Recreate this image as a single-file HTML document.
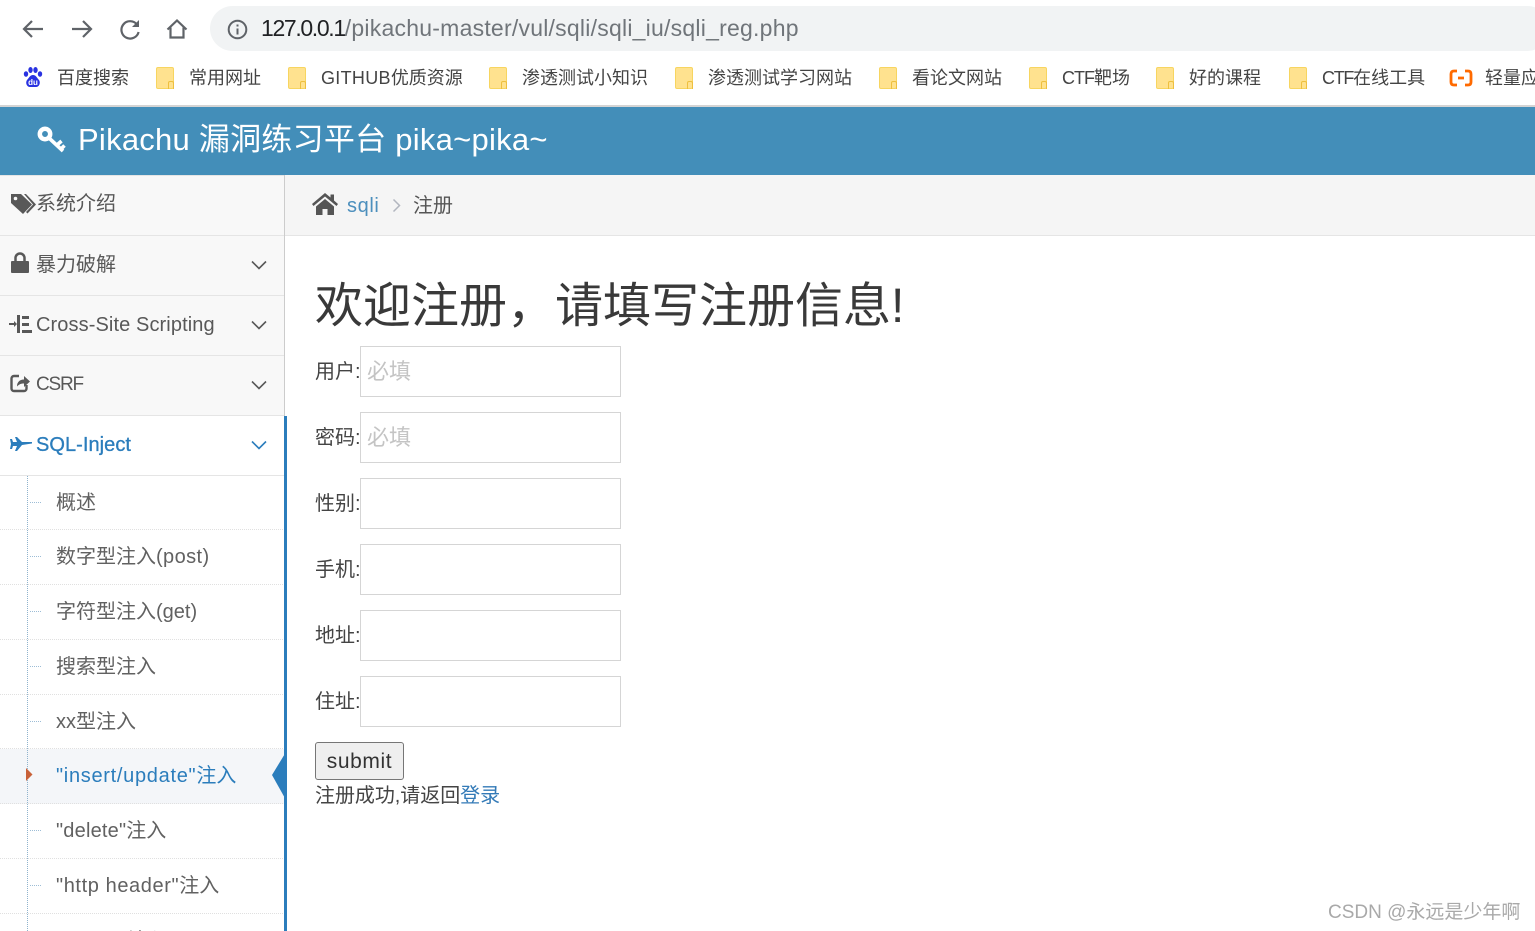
<!DOCTYPE html>
<html lang="zh"><head><meta charset="utf-8"><title>Pikachu</title>
<style>
*{box-sizing:border-box}
html,body{margin:0;padding:0;width:1535px;height:931px;overflow:hidden;background:#fff}
body{position:relative;font-family:"Liberation Sans","Noto Sans CJK SC",sans-serif;color:#393939}
.a{position:absolute;white-space:nowrap}
.bm{font-size:18px;line-height:24px;top:66px;color:#444}
.f{position:absolute;top:67px;width:18px;height:22px;background:#ffe28f;border:1px solid #f7d560;border-radius:2px}
.f:after{content:"";position:absolute;right:-1px;bottom:-1px;width:4px;height:7px;border:1px solid #eebf3f;border-radius:2px 2px 0 0;border-bottom:0}
.m{position:absolute;left:0;width:285px;height:60px;background:#f8f8f8;border-bottom:1px solid #e5e5e5;border-right:1px solid #ccc}
.m span{position:absolute;left:36px;top:15px;font-size:20px;line-height:28px;color:#585858;white-space:nowrap}
.m svg.c{position:absolute;left:251px;top:24px}
.m svg.i{position:absolute;left:9px;top:18px}
.s{position:absolute;left:0;width:285px;border-bottom:1px dotted #e0e0e0;background:#fff}
.s span{position:absolute;left:56px;top:14px;font-size:20px;line-height:26px;color:#616161;white-space:nowrap}
.s i{position:absolute;left:30px;width:11px;border-top:1px dotted #9dbdd6}
.lb{position:absolute;left:315px;font-size:20px;line-height:24px;color:#444;white-space:nowrap}
.in{position:absolute;left:360px;width:261px;height:51px;border:1px solid #d5d5d5;background:#fff;font-size:22px;line-height:47px;padding-left:6px;color:#c4c4c4}
</style></head><body>

<!-- browser toolbar -->
<svg class="a" style="left:20px;top:16px" width="170" height="26" viewBox="0 0 170 26" fill="none" stroke="#5f6368" stroke-width="2.2">
<path d="M23 13H4M12 5l-8 8 8 8"/>
<path d="M52 13h19M63 5l8 8-8 8"/>
<path d="M117 8.500a8.700 8.700 0 1 0 1.600 7.500"/><path d="M119 4v7h-7z" fill="#5f6368" stroke="none"/>
<path d="M147.500 13.500 157 4.500l9.500 9M150.500 11.500V21.500h13V11.500" stroke-linejoin="miter"/>
</svg>
<div class="a" style="left:210px;top:6px;width:1340px;height:45px;background:#f1f3f4;border-radius:23px"></div>
<svg class="a" style="left:227px;top:19px" width="21" height="21" viewBox="0 0 21 21" fill="none" stroke="#5f6368" stroke-width="2"><circle cx="10.500" cy="10.500" r="8.800"/><path d="M10.500 9.500v6M10.500 5.500v2"/></svg>
<div class="a" style="left:261px;top:14px;font-size:23px;line-height:29px;color:#70757a;letter-spacing:.23px"><span style="color:#202124;letter-spacing:-1.35px">127.0.0.1</span>/pikachu-master/vul/sqli/sqli_iu/sqli_reg.php</div>

<!-- bookmarks -->
<svg class="a" style="left:22px;top:66px" width="22" height="22" viewBox="0 0 22 22"><g fill="#2932e1"><ellipse cx="4" cy="8" rx="2.200" ry="2.800"/><ellipse cx="8.500" cy="4" rx="2.200" ry="3"/><ellipse cx="13.500" cy="4" rx="2.200" ry="3"/><ellipse cx="18" cy="8" rx="2.200" ry="2.800"/><path d="M11 9c-3 0-4 3-6 5-2 3 0 7 3 7h6c3 0 5-4 3-7-2-2-3-5-6-5z"/></g><text x="11" y="19" font-size="8" font-weight="700" text-anchor="middle" fill="#fff" font-family="Liberation Sans">du</text></svg>
<div class="a bm" style="left:57px">百度搜索</div>
<div class="f" style="left:156px"></div><div class="a bm" style="left:189px">常用网址</div>
<div class="f" style="left:288px"></div><div class="a bm" style="left:321px"><span style="letter-spacing:.3px">GITHUB</span>优质资源</div>
<div class="f" style="left:489px"></div><div class="a bm" style="left:522px">渗透测试小知识</div>
<div class="f" style="left:675px"></div><div class="a bm" style="left:708px">渗透测试学习网站</div>
<div class="f" style="left:879px"></div><div class="a bm" style="left:912px">看论文网站</div>
<div class="f" style="left:1029px"></div><div class="a bm" style="left:1062px"><span style="letter-spacing:-1px">CTF</span>靶场</div>
<div class="f" style="left:1156px"></div><div class="a bm" style="left:1189px">好的课程</div>
<div class="f" style="left:1289px"></div><div class="a bm" style="left:1322px"><span style="letter-spacing:-1.300px">CTF</span>在线工具</div>
<svg class="a" style="left:1449px;top:69px" width="24" height="18" viewBox="0 0 24 18" fill="none" stroke="#ff6a00" stroke-width="2.800"><path d="M8 2H5C3 2 2 3 2 5v8c0 2 1 3 3 3h3M16 2h3c2 0 3 1 3 3v8c0 2-1 3-3 3h-3M9 9h6"/></svg>
<div class="a bm" style="left:1485px">轻量应用</div>
<div class="a" style="left:0;top:105px;width:1535px;height:2px;background:#d4d4d4"></div>

<!-- navbar -->
<div class="a" style="left:0;top:107px;width:1535px;height:68px;background:#438eb9"></div>
<svg class="a" style="left:37px;top:125px" width="30" height="28" viewBox="0 0 30 28" fill="none" stroke="#fff"><circle cx="8" cy="9" r="5.200" stroke-width="4.500"/><path d="M12 13l14 13M20 20l4.500-4M24 24l3.500-3.500" stroke-width="3.600"/></svg>
<div class="a" style="left:78px;top:121px;font-size:31px;line-height:38px;color:#fff;letter-spacing:.25px">Pikachu 漏洞练习平台 pika~pika~</div>

<!-- breadcrumb -->
<div class="a" style="left:285px;top:175px;width:1250px;height:61px;background:#f5f5f5;border-bottom:1px solid #e5e5e5"></div>
<svg class="a" style="left:311px;top:192px" width="28" height="24" viewBox="0 0 28 24" fill="#555"><path d="M14 1 1 12l1.500 2L14 4.500 25.500 14l1.500-2-4-3.500V2.500h-3.500v3z"/><path d="M5 14.500 14 7l9 7.500V23h-6.500v-6h-5v6H5z"/></svg>
<div class="a" style="left:347px;top:193px;font-size:20px;line-height:26px;color:#4c8fbd;letter-spacing:.6px">sqli</div>
<svg class="a" style="left:391px;top:198px" width="11" height="15" viewBox="0 0 11 15" fill="none" stroke="#b2b6bf" stroke-width="1.500"><path d="M2.500 1.500 8.500 7.500 2.500 13.500"/></svg>
<div class="a" style="left:413px;top:193px;font-size:20px;line-height:26px;color:#555">注册</div>

<!-- sidebar -->
<div class="m" style="top:175px;height:61px;border-top:1px solid #e5e5e5"><svg class="i" style="top:17px;left:10px" width="27" height="22" viewBox="0 0 27 22" fill="#585858"><path d="M1 1h10l11 10.500-9 9.500L1 10z"/><path d="M14 1h2l10 10.500-8.500 9-1.500-1.500 7-7.500z"/><circle cx="5.500" cy="5.500" r="1.800" fill="#f8f8f8"/></svg><span style="top:14px">系统介绍</span></div>
<div class="m" style="top:236px"><svg class="i" style="left:11px;top:16px" width="18" height="22" viewBox="0 0 18 22" fill="#585858"><path d="M1 9h16a1 1 0 0 1 1 1v10a1 1 0 0 1-1 1H1a1 1 0 0 1-1-1V10a1 1 0 0 1 1-1z"/><path d="M4.500 9V6a4.500 4.500 0 0 1 9 0v3" fill="none" stroke="#585858" stroke-width="2.500"/></svg><span>暴力破解</span><svg class="c" width="16" height="11" viewBox="0 0 16 11" fill="none" stroke="#585858" stroke-width="1.600"><path d="M1 1.500 8 8.500 15 1.500"/></svg></div>
<div class="m" style="top:296px"><svg class="i" style="top:19px" width="23" height="18" viewBox="0 0 23 18" fill="#585858"><path d="M0 8h5V6l3 3-3 3v-2H0zM8 0h3v18H8zM13 1h7v3h-7zM13 8h7v3h-7zM13 15h10v3H13z"/></svg><span style="letter-spacing:.1px">Cross-Site Scripting</span><svg class="c" width="16" height="11" viewBox="0 0 16 11" fill="none" stroke="#585858" stroke-width="1.600"><path d="M1 1.500 8 8.500 15 1.500"/></svg></div>
<div class="m" style="top:356px"><svg class="i" style="left:10px;top:17px" width="22" height="20" viewBox="0 0 22 20" fill="none" stroke="#585858" stroke-width="2.400"><path d="M9 3H4a2.500 2.500 0 0 0-2.500 2.500v10A2.500 2.500 0 0 0 4 18h10a2.500 2.500 0 0 0 2.500-2.500V12"/><path d="M7 13c0-4 3-6.500 7-6.500V3l6 5.500-6 5.500v-3.500c-3 0-5 .8-7 3z" fill="#585858" stroke="none"/></svg><span style="font-size:19px;letter-spacing:-1.200px">CSRF</span><svg class="c" width="16" height="11" viewBox="0 0 16 11" fill="none" stroke="#585858" stroke-width="1.600"><path d="M1 1.500 8 8.500 15 1.500"/></svg></div>
<div class="m" style="top:416px;background:#fff"><svg class="i" style="left:10px;top:20px" width="22" height="16" viewBox="0 0 22 16" fill="#2b7dbc"><path d="M0 3h2l1 3h4L5 1h2l5 5h10v1.500L12 9l-5 6H5l2-5H3l-1 3H0l1-5z"/></svg><span style="color:#2b7dbc;letter-spacing:.05px;-webkit-text-stroke:.3px #2b7dbc">SQL-Inject</span><svg class="c" width="16" height="11" viewBox="0 0 16 11" fill="none" stroke="#2b7dbc" stroke-width="1.600"><path d="M1 1.500 8 8.500 15 1.500"/></svg></div>
<div class="a" style="left:284px;top:175px;width:1px;height:241px;background:#ccc"></div>

<div class="s" style="top:476px;height:54px"><i style="top:26px"></i><span>概述</span></div>
<div class="s" style="top:530px;height:55px"><i style="top:26px"></i><span>数字型注入<b style="font-weight:400;letter-spacing:.4px">(post)</b></span></div>
<div class="s" style="top:585px;height:55px"><i style="top:26px"></i><span>字符型注入(get)</span></div>
<div class="s" style="top:640px;height:55px"><i style="top:26px"></i><span>搜索型注入</span></div>
<div class="s" style="top:695px;height:54px"><i style="top:26px"></i><span>xx型注入</span></div>
<div class="s" style="top:749px;height:55px;background:#f4f6f9"><span style="color:#2b7dbc"><b style="font-weight:400;letter-spacing:.7px">"insert/update"</b>注入</span></div>
<div class="s" style="top:804px;height:55px"><i style="top:26px"></i><span><b style="font-weight:400;letter-spacing:.2px">"delete"</b>注入</span></div>
<div class="s" style="top:859px;height:55px"><i style="top:26px"></i><span><b style="font-weight:400;letter-spacing:.6px">"http header"</b>注入</span></div>
<div class="s" style="top:914px;height:17px;border:0"><i style="top:26px"></i><span>"cookie"注入</span></div>
<div class="a" style="left:27px;top:476px;width:0;height:455px;border-left:1px dotted #8fb3cd"></div>
<svg class="a" style="left:26px;top:768px" width="7" height="13" viewBox="0 0 7 13"><path d="M0 0l6.500 6.500L0 13z" fill="#c86139"/></svg>
<svg class="a" style="left:272px;top:752px" width="14" height="48" viewBox="0 0 14 48"><path d="M14 0v48L0 23z" fill="#2b7dbc"/></svg>
<div class="a" style="left:284px;top:416px;width:3px;height:515px;background:#2b7dbc"></div>

<!-- content -->
<div class="a" style="left:315px;top:274px;font-size:48px;line-height:66px;color:#393939">欢迎注册，请填写注册信息!</div>

<div class="lb" style="top:360px">用户:</div><div class="in" style="top:346px;line-height:50px">必填</div>
<div class="lb" style="top:426px">密码:</div><div class="in" style="top:412px;line-height:50px">必填</div>
<div class="lb" style="top:492px">性别:</div><div class="in" style="top:478px"></div>
<div class="lb" style="top:558px">手机:</div><div class="in" style="top:544px"></div>
<div class="lb" style="top:624px">地址:</div><div class="in" style="top:610px"></div>
<div class="lb" style="top:690px">住址:</div><div class="in" style="top:676px"></div>

<div class="a" style="left:315px;top:742px;width:89px;height:38px;background:#efefef;border:1px solid #767676;border-radius:3px;font-size:21px;line-height:37px;text-align:center;color:#333;letter-spacing:.6px">submit</div>
<div class="lb" style="top:784px;letter-spacing:-.05px">注册成功,请返回<span style="color:#337ab7">登录</span></div>

<div class="a" style="left:1328px;top:900px;font-size:19px;line-height:25px;color:#a9a9a9">CSDN @永远是少年啊</div>
</body></html>
